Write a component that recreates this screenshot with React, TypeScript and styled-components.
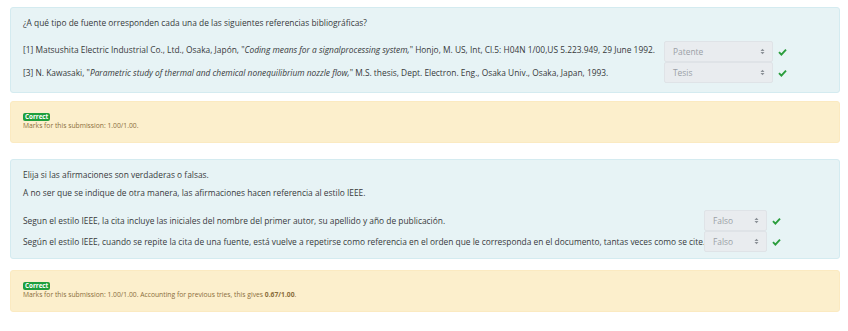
import React from 'react';
import styled, { createGlobalStyle } from 'styled-components';

const GlobalStyle = createGlobalStyle`
    body {
        margin: 0;
        background: #fff;
        font-family: 'Open Sans', 'Noto Sans', sans-serif;
        color: #373a3c;
    }
`;

const Page = styled.div`
    display: flex;
    flex-direction: column;
    padding: 7px 8px 0 10px;
    width: 830px;
`;

const QuestionPanel = styled.div<{ $gap: number; $padBottom: number }>`
    background: #e7f3f5;
    border: 1px solid #d4ebf0;
    border-radius: 3px;
    padding: 8px 12px ${p => p.$padBottom}px 12px;
    margin-bottom: ${p => p.$gap}px;
    font-size: 8.4px;
`;

const Prompt = styled.p<{ $after: number }>`
    margin: 0 0 ${p => p.$after}px 0;
    line-height: 13px;
`;

const AnswerRow = styled.div`
    display: flex;
    align-items: center;
    height: 21px;
`;

const RowText = styled.div<{ $width: number; $lift?: number }>`
    width: ${p => p.$width}px;
    flex-shrink: 0;
    white-space: nowrap;
    margin-top: ${p => -(p.$lift ?? 0)}px;
`;

const Select = styled.div<{ $width: number }>`
    display: flex;
    align-items: center;
    justify-content: space-between;
    box-sizing: border-box;
    width: ${p => p.$width}px;
    height: 21px;
    padding: 0 7px 0 8px;
    background: #e9ecef;
    border: 1px solid #dfe3e7;
    border-radius: 2px;
    color: #9aa0a6;
    font-size: 8.4px;
`;

const Caret = styled.svg`
    width: 5px;
    height: 7px;
`;

const Check = styled.svg`
    width: 9px;
    height: 8px;
    margin-left: 5px;
`;

const Feedback = styled.div<{ $gap: number }>`
    background: #fcefcc;
    border: 1px solid #fbeac1;
    border-radius: 3px;
    padding: 11px 12px 11px 12px;
    margin-bottom: ${p => p.$gap}px;
    color: #8a6d3b;
    font-size: 6.75px;
    line-height: 10px;
`;

const Badge = styled.div`
    width: fit-content;
    background: #1f9e3c;
    color: #fff;
    font-weight: 700;
    font-size: 6.3px;
    line-height: 8px;
    padding: 0 2px;
    border-radius: 2px;
`;

const Marks = styled.div``;

const Strong = styled.b`
    font-weight: 700;
`;

const Italic = styled.i``;

const SelectBox = ({ value, width }: { value: string; width: number }) => (
    <>
        <Select $width={width}>
            <span>{value}</span>
            <Caret viewBox="0 0 5 7">
                <path d="M0.5 3 L2.5 0.8 L4.5 3 Z M0.5 4 L2.5 6.2 L4.5 4 Z" fill="#8a9096" />
            </Caret>
        </Select>
        <Check viewBox="0 0 9 8">
            <path d="M1 4.2 L3.4 6.6 L8 1.6" stroke="#2a9d3c" strokeWidth="1.9" fill="none" />
        </Check>
    </>
);

export default function App() {
    return (
        <>
            <GlobalStyle />
            <Page>
                <QuestionPanel $gap={8} $padBottom={9}>
                    <Prompt $after={12}>
                        ¿A qué tipo de fuente orresponden cada una de las siguientes referencias bibliográficas?
                    </Prompt>
                    <AnswerRow>
                        <RowText $width={641} $lift={5}>
                            [1] Matsushita Electric Industrial Co., Ltd., Osaka, Japón, "
                            <Italic>Coding means for a signalprocessing system,</Italic>" Honjo, M. US, Int, Cl.5: H04N 1/00,US 5.223.949, 29 June 1992.
                        </RowText>
                        <SelectBox value="Patente" width={109} />
                    </AnswerRow>
                    <AnswerRow>
                        <RowText $width={641} $lift={1}>
                            [3] N. Kawasaki, "
                            <Italic>Parametric study of thermal and chemical nonequilibrium nozzle flow,</Italic>" M.S. thesis, Dept. Electron. Eng., Osaka Univ., Osaka, Japan, 1993.
                        </RowText>
                        <SelectBox value="Tesis" width={109} />
                    </AnswerRow>
                </QuestionPanel>
                <Feedback $gap={16}>
                    <Badge>Correct</Badge>
                    <Marks>Marks for this submission: 1.00/1.00.</Marks>
                </Feedback>
                <QuestionPanel $gap={11} $padBottom={6}>
                    <Prompt $after={5}>Elija si las afirmaciones son verdaderas o falsas.</Prompt>
                    <Prompt $after={11}>
                        A no ser que se indique de otra manera, las afirmaciones hacen referencia al estilo IEEE.
                    </Prompt>
                    <AnswerRow>
                        <RowText $width={681}>
                            Segun el estilo IEEE, la cita incluye las iniciales del nombre del primer autor, su apellido y año de publicación.
                        </RowText>
                        <SelectBox value="Falso" width={63} />
                    </AnswerRow>
                    <AnswerRow>
                        <RowText $width={681}>
                            Según el estilo IEEE, cuando se repite la cita de una fuente, está vuelve a repetirse como referencia en el orden que le corresponda en el documento, tantas veces como se cite.
                        </RowText>
                        <SelectBox value="Falso" width={63} />
                    </AnswerRow>
                </QuestionPanel>
                <Feedback $gap={0}>
                    <Badge>Correct</Badge>
                    <Marks>
                        Marks for this submission: 1.00/1.00. Accounting for previous tries, this gives <Strong>0.67/1.00</Strong>.
                    </Marks>
                </Feedback>
            </Page>
        </>
    );
}
